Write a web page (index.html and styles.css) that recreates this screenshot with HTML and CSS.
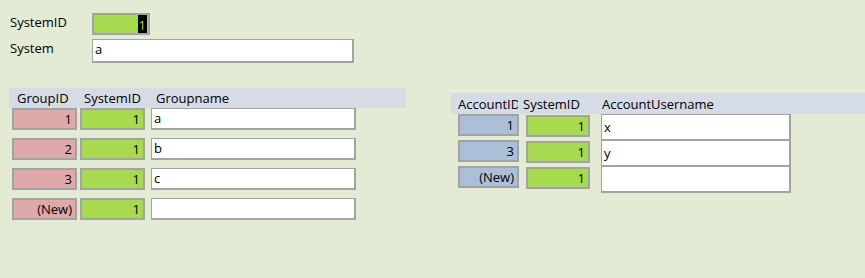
FILE: index.html
```html
<!DOCTYPE html>
<html>
<head>
<meta charset="utf-8">
<link rel="stylesheet" href="styles.css">
</head>
<body>
<div class="form">
  <div class="main">
    <div class="main-row">
      <span class="label">SystemID</span>
      <div class="box green id-box"><span class="sel">1</span></div>
    </div>
    <div class="main-row second">
      <span class="label">System</span>
      <div class="box white sys-box">a</div>
    </div>
  </div>

  <div class="subforms">
    <div class="sub left">
      <div class="head">
        <span class="h h1">GroupID</span>
        <span class="h h2">SystemID</span>
        <span class="h h3">Groupname</span>
      </div>
      <div class="rows">
        <div class="row"><div class="box pink c1">1</div><div class="box green c2">1</div><div class="box white c3">a</div></div>
        <div class="row"><div class="box pink c1">2</div><div class="box green c2">1</div><div class="box white c3">b</div></div>
        <div class="row"><div class="box pink c1">3</div><div class="box green c2">1</div><div class="box white c3">c</div></div>
        <div class="row"><div class="box pink c1">(New)</div><div class="box green c2">1</div><div class="box white c3"></div></div>
      </div>
    </div>

    <div class="sub right">
      <div class="head">
        <span class="h r1">AccountID</span>
        <span class="h r2">SystemID</span>
        <span class="h r3">AccountUsername</span>
      </div>
      <div class="rows">
        <div class="row"><div class="box blue d1">1</div><div class="box green d2">1</div><div class="box white d3">x</div></div>
        <div class="row"><div class="box blue d1">3</div><div class="box green d2">1</div><div class="box white d3">y</div></div>
        <div class="row"><div class="box blue d1">(New)</div><div class="box green d2">1</div><div class="box white d3"></div></div>
      </div>
    </div>
  </div>
</div>
</body>
</html>
```

FILE: styles.css
```css
html, body {
  margin: 0;
  padding: 0;
}
body {
  width: 865px;
  height: 278px;
  background: #e3ebd5;
  font-family: "Open Sans", "Noto Sans", sans-serif;
  font-size: 13px;
  color: #000;
  overflow: hidden;
}
.form {
  display: flex;
  flex-direction: column;
}
.main {
  padding: 13px 0 0 10px;
  display: flex;
  flex-direction: column;
}
.main-row {
  display: flex;
  align-items: flex-start;
}
.main-row.second {
  margin-top: 4px;
}
.label {
  width: 82px;
  line-height: 16px;
  padding-top: 1px;
}
.box {
  box-sizing: border-box;
  border: 2px solid #a3a3a3;
  height: 22px;
  line-height: 18px;
  white-space: nowrap;
  overflow: hidden;
}
.green { background: #a8da4f; text-align: right; padding-right: 3px; }
.pink { background: #e0a9a9; text-align: right; padding-right: 3px; }
.blue { background: #abbfd8; text-align: right; padding-right: 3px; }
.white { background: #fff; padding-left: 2px; border-width: 1px 2px 2px 1px; border-color: #a3a3a3; }
.id-box {
  width: 58px;
  padding-right: 1px;
}
.sel {
  display: inline-block;
  background: #000;
  color: #a8da4f;
  padding: 0 1px;
  line-height: 20px;
}
.sys-box {
  width: 262px;
  height: 24px;
  line-height: 18px;
  border: 1px solid #a3a3a3;
  border-width: 1px 2px 2px 1px;
}

.subforms {
  display: flex;
  align-items: flex-start;
  margin-top: 25px;
}
.sub .head {
  display: flex;
  align-items: center;
  background: #d5dce5;
  white-space: nowrap;
}
.left {
  margin-left: 9px;
  width: 397px;
}
.left .head { height: 20px; }
.h { display: block; overflow: hidden; }
.h1 { margin-left: 8px; width: 67px; }
.h2 { width: 72px; }
.left .rows {
  display: flex;
  flex-direction: column;
  gap: 8px;
  padding-left: 3px;
}
.row {
  display: flex;
}
.c1 { width: 65px; }
.c2 { width: 65px; margin-left: 3px; }
.c3 { width: 205px; margin-left: 6px; }

.right {
  margin-left: 45px;
  margin-top: 5px;
  flex: 1;
}
.right .head { height: 21px; }
.r1 { margin-left: 7px; width: 60px; }
.r2 { margin-left: 5px; width: 79px; }
.right .rows {
  padding-left: 7px;
  display: flex;
  flex-direction: column;
}
.right .row { height: 26px; }
.d1 { width: 61px; }
.d2 { width: 64px; margin-left: 7px; margin-top: 1px; }
.d3 {
  width: 190px;
  height: 27px;
  margin-left: 11px;
  line-height: 24px;
  border-width: 1px 2px 2px 1px;
}
.right .row:nth-child(n+2) .d3 { margin-top: -1px; border-top-width: 2px; height: 28px; }
```
